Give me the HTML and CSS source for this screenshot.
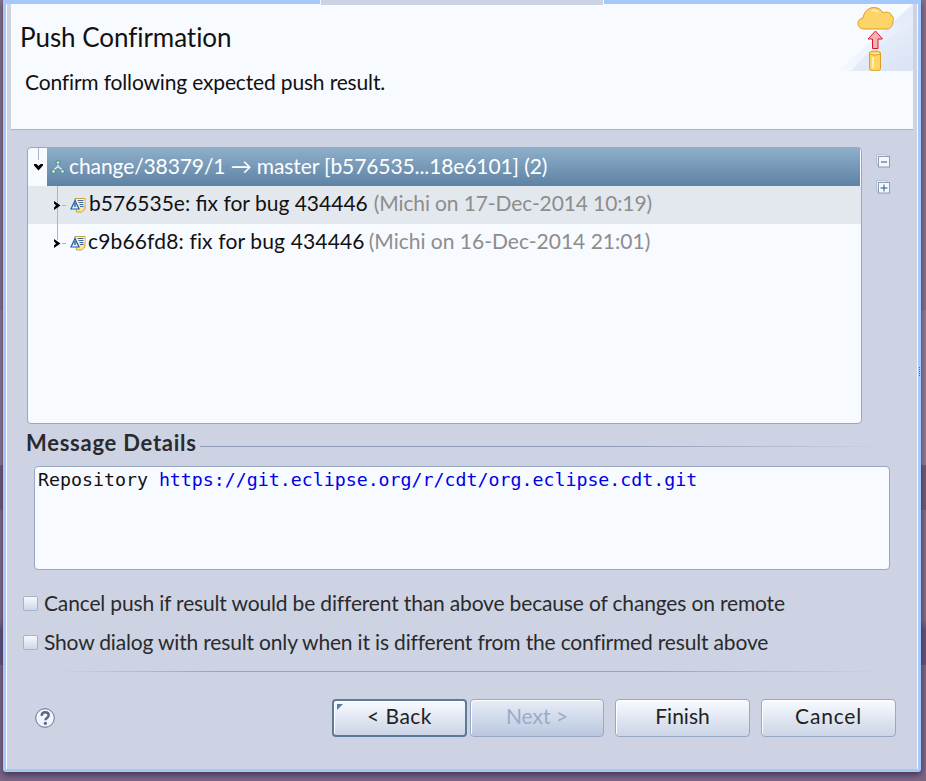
FILE: index.html
```html
<!DOCTYPE html>
<html lang="en">
<head>
<meta charset="utf-8">
<title>Push Confirmation</title>
<link rel="stylesheet" href="styles.css">
</head>
<body>
<div class="window">
  <div class="titlebar"><div class="tab"></div></div>
  <span class="grip"></span>
  <div class="inner">
    <header class="banner">
      <h1 class="title">Push Confirmation</h1>
      <p class="desc">Confirm following expected push result.</p>
      <svg class="wizimg" width="76" height="67" viewBox="0 0 76 67">
        <defs>
          <linearGradient id="wedge" x1="0" y1="1" x2="1" y2="0"><stop offset="0" stop-color="#f5f8fe"/><stop offset="1" stop-color="#e2e9f8"/></linearGradient>
          <linearGradient id="wedge2" x1="0" y1="0" x2="1" y2="1"><stop offset="0" stop-color="#eef2fb"/><stop offset="1" stop-color="#d9e3f5"/></linearGradient>
        </defs>
        <path d="M0 67Q38 35 76 0V67Z" fill="url(#wedge)"/>
        <path d="M14 67Q40 36 76 22V67Z" fill="url(#wedge2)"/>
        <path d="M27 25c-3.500 0-6-2.300-6-5.500 0-3 2-5 5-5.500C27 8 31 3.500 37 3.500c4.500 0 7.500 2.500 9 5.500 1.200-.6 2.300-.8 3.500-.8 3 0 5 1.600 5.500 4.300 0 0 0 0 .5 0 2.200 .9 .5 2.600 .5 5 0 4-2.500 7.500-6 7.500z" fill="#fdd467" stroke="#dd9f1f"/>
        <path d="M35 6.500c2.500-.8 5 0 6.500 2" fill="none" stroke="#ffefb8" stroke-width="1.500"/>
        <path d="M38.500 27l7 8h-4.500v9.500h-5.500V35H31z" fill="#f7b2b4" stroke="#d4182b"/>
        <path d="M32.500 49c0-2.600 11-2.600 11 0v16c0 2.400-11 2.400-11 0z" fill="#fdd467" stroke="#dd9f1f"/>
        <path d="M32.500 49c0 2.600 11 2.600 11 0" fill="#fde9a0" stroke="#dd9f1f"/>
        <path d="M36 53v11" stroke="#ffeeb5" stroke-width="2"/>
      </svg>
    </header>
    <div class="body">
      <div class="treearea">
        <div class="tree">
          <span class="guide guide-a"></span>
          <span class="guide guide-b"></span>
          <div class="row row-root">
            <svg class="tw tw-open" width="9" height="7" viewBox="0 0 9 7"><path d="M0 0h2.500L4.500 2 6.500 0H9V1.500L4.500 6.500 0 1.500z" fill="#000"/></svg>
            <div class="sel">
              <svg class="ic-branch" width="14" height="14" viewBox="0 0 14 14"><path d="M7 3v4.500M7 6.500L2.500 10M7 6.500l4.500 3.500" fill="none" stroke="#e4f5ee" stroke-width="1.300"/><circle cx="7" cy="2.500" r="1.900" fill="#c9ece0" stroke="#2f7f6f" stroke-width=".8"/><circle cx="2.500" cy="11.500" r="1.900" fill="#c9ece0" stroke="#2f7f6f" stroke-width=".8"/><circle cx="11.500" cy="11.500" r="1.900" fill="#c9ece0" stroke="#2f7f6f" stroke-width=".8"/></svg>
              <span class="seltext">change/38379/1 → master [b576535...18e6101] (2)</span>
            </div>
          </div>
          <div class="row row-commit row-alt">
            <svg class="tw tw-closed" width="7" height="9" viewBox="0 0 7 9"><path d="M0 0l6.500 4.500L0 9V6.500L2 4.500 0 2.500z" fill="#000"/></svg>
            <span class="dash"></span>
            <svg class="ic-commit" width="16" height="16" viewBox="0 0 16 16"><path d="M5 1.500h10v10.500l-3.500 3H6.500z" fill="#fde68f" stroke="#c9a23a"/><path d="M6 2h8.500v6H6z" fill="#f2f4f2"/><path d="M7.500 3.500h6M8.500 5.500h5M9.500 7.500h4M10 9.500h3.500" stroke="#41689f"/><path d="M5 3.500L1 12h8z" fill="#e8eef8" stroke="#1f5ea8" stroke-width="1.200"/><path d="M5 6v4" stroke="#1f5ea8" stroke-width="1.400"/></svg>
            <span class="ctext">b576535e: fix for bug 434446</span>
            <span class="cmeta">(Michi on 17-Dec-2014 10:19)</span>
          </div>
          <div class="row row-commit">
            <svg class="tw tw-closed" width="7" height="9" viewBox="0 0 7 9"><path d="M0 0l6.500 4.500L0 9V6.500L2 4.500 0 2.500z" fill="#000"/></svg>
            <span class="dash"></span>
            <svg class="ic-commit" width="16" height="16" viewBox="0 0 16 16"><path d="M5 1.500h10v10.500l-3.500 3H6.500z" fill="#fde68f" stroke="#c9a23a"/><path d="M6 2h8.500v6H6z" fill="#f2f4f2"/><path d="M7.500 3.500h6M8.500 5.500h5M9.500 7.500h4M10 9.500h3.500" stroke="#41689f"/><path d="M5 3.500L1 12h8z" fill="#e8eef8" stroke="#1f5ea8" stroke-width="1.200"/><path d="M5 6v4" stroke="#1f5ea8" stroke-width="1.400"/></svg>
            <span class="ctext ctext-c">c9b66fd8: fix for bug 434446</span>
            <span class="cmeta cmeta-c">(Michi on 16-Dec-2014 21:01)</span>
          </div>
        </div>
        <div class="sidetools">
          <svg width="14" height="14" viewBox="0 0 14 14"><rect x=".5" y=".5" width="10" height="10" fill="#e6ecf5" stroke="#b6c2d6"/><rect x="2.500" y="2.500" width="11" height="10.500" fill="#f4f7fb" stroke="#8d9cb5"/><path d="M5 8h6" stroke="#1c5a8c"/></svg>
          <svg width="14" height="14" viewBox="0 0 14 14"><rect x=".5" y=".5" width="10" height="10" fill="#e6ecf5" stroke="#b6c2d6"/><rect x="2.500" y="2.500" width="11" height="10.500" fill="#f4f7fb" stroke="#8d9cb5"/><path d="M4.500 8h7M8 4.500v7" stroke="#1c5a8c"/></svg>
        </div>
      </div>
      <div class="grouphead"><span class="grouplabel">Message Details</span><span class="groupline"></span></div>
      <div class="msgbox">Repository <span class="link">https://git.eclipse.org/r/cdt/org.eclipse.cdt.git</span></div>
      <label class="check check-1"><span class="box"></span><span class="cancel-text">Cancel push if result would be different than above because of changes on remote</span></label>
      <label class="check check-2"><span class="box"></span><span class="show-text">Show dialog with result only when it is different from the confirmed result above</span></label>
      <div class="sep"></div>
      <div class="footer">
        <svg class="help" width="20" height="20" viewBox="0 0 20 20"><circle cx="10" cy="10" r="9.300" fill="#f3f5fa" stroke="#5d7396"/><path d="M6.600 7.800C6.800 5.300 8.400 4.300 10.100 4.300c2.100 0 3.600 1.300 3.600 3 0 2.600-3.300 2.700-3.300 5" fill="none" stroke="#56688a" stroke-width="2.400"/><circle cx="10.400" cy="15.300" r="1.600" fill="#56688a"/></svg>
        <div class="buttons">
          <button class="btn btn-default">&lt; Back</button>
          <button class="btn btn-disabled">Next &gt;</button>
          <button class="btn btn-finish">Finish</button>
          <button class="btn btn-cancel">Cancel</button>
        </div>
      </div>
    </div>
  </div>
</div>
</body>
</html>
```
FILE: styles.css
```css
* { box-sizing: border-box; }
html, body { margin: 0; height: 781px; overflow: hidden; }
body {
  background: linear-gradient(#84718f 0, #84718f 310px, #8d7c98 310px, #8d7c98 465px, #6f5c7c 465px, #6f5c7c 510px, #7f6c8a 510px, #7f6c8a 620px, #5f5480 630px, #5f5480 665px, #7a6787 665px);
  font-family: Lato, "Noto Sans", sans-serif;
  color: #222;
}
.window {
  position: relative;
  margin-left: 3px;
  width: 918px;
  height: 772px;
  background: #a5c8fa;
  padding: 0 3px 3px 3px;
  border-radius: 0 0 3px 3px;
  box-shadow: 0 3px 6px rgba(50, 30, 60, .7);
  display: flex;
  flex-direction: column;
}
.grip { position: absolute; right: 1px; top: 367px; width: 1px; height: 9px; border-left: 1px dotted #2e72b8; }
.titlebar { height: 4px; padding-left: 314px; flex: none; }
.tab { position: relative; z-index: 1; width: 284px; height: 5px; background: #cdd3e2; border-left: 1px solid #f4f7fe; border-right: 1px solid #f4f7fe; }
.inner {
  flex: 1;
  background: #cdd3e2;
  border-left: 1px solid #f7faff;
  border-right: 1px solid #f7faff;
  display: flex;
  flex-direction: column;
}
.banner {
  position: relative;
  margin: 0 4px;
  height: 126px;
  background: #f7faff;
  border-bottom: 1px solid #a9b4cc;
  padding: 16px 0 0 9px;
  flex: none;
}
.title { margin: 0; font-size: 26px; line-height: 34px; font-weight: 400; color: #111; letter-spacing: -.05px; }
.desc { margin: 15px 0 0 5px; font-size: 21px; line-height: 26px; color: #111; letter-spacing: -.16px; }
.wizimg { position: absolute; right: 0; top: 0; display: block; }
.body { padding: 17px 0 0 20px; flex: 1; display: flex; flex-direction: column; }
.treearea { display: flex; height: 277px; flex: none; }
.tree {
  position: relative;
  width: 835px;
  height: 277px;
  background: #f7faff;
  border: 1px solid #9aa7c0;
  border-radius: 4px;
  font-size: 21px;
  color: #111;
}
.guide { position: absolute; width: 1px; background: #a9b5cc; }
.guide-a { left: 10px; top: 0; height: 12px; }
.guide-b { left: 29px; top: 38px; height: 54px; z-index: 1; }
.row { height: 38px; display: flex; align-items: center; white-space: nowrap; position: relative; }
.row-root { padding-left: 19px; }
.row-alt { background: #e3e8ee; }
.sel {
  flex: 1;
  height: 38px;
  margin-right: 1px;
  display: flex;
  align-items: center;
  background: linear-gradient(#8fafca, #5d82a4);
  color: #fff;
  padding-left: 4px;
}
.seltext { margin-left: 4px; padding-bottom: 4px; letter-spacing: -.1px; }
.tw { position: absolute; display: block; z-index: 2; }
.tw-open { left: 6px; top: 16px; }
.tw-closed { left: 26px; top: 15px; }
.dash { position: absolute; left: 34px; top: 19px; width: 4px; height: 1px; background: #a9b5cc; }
.ic-commit { margin-left: 42px; flex: none; }
.ctext { margin-left: 3px; padding-bottom: 5px; }
.ctext-c { margin-left: 2px; letter-spacing: .15px; }
.cmeta { margin-left: 6px; color: #8d8d8d; padding-bottom: 5px; letter-spacing: -.12px; }
.cmeta-c { margin-left: 4px; letter-spacing: 0; }
.sidetools { margin-left: 14px; padding-top: 7px; display: flex; flex-direction: column; gap: 12px; }
.sidetools svg { display: block; }
.grouphead { display: flex; align-items: center; height: 24px; margin-top: 8px; }
.grouplabel { font-size: 22px; font-weight: 700; color: #2a2a2e; letter-spacing: .75px; padding-bottom: 4px; margin-left: -1px; }
.groupline { flex: 1; height: 1px; margin: 4px 30px 0 3px; background: linear-gradient(90deg, #8e9bb5 60%, rgba(142,155,181,0)); }
.msgbox {
  margin: 10px 0 0 7px;
  width: 856px;
  height: 104px;
  background: #f7faff;
  border: 1px solid #9aa7c0;
  border-radius: 4px;
  padding: 1px 3px;
  font-family: "DejaVu Sans Mono", monospace;
  font-size: 18.250px;
  line-height: 24px;
  color: #111;
}
.link { color: #0000e6; }
.check { display: flex; align-items: center; height: 26px; font-size: 21px; color: #2a2a2e; margin-left: -4px; white-space: nowrap; }
.check-1 { margin-top: 20px; }
.check-2 { margin-top: 13px; }
.cancel-text { padding-bottom: 2px; letter-spacing: -.16px; }
.show-text { padding-bottom: 2px; letter-spacing: -.17px; }
.box {
  width: 15px;
  height: 15px;
  border: 1px solid #a6b2c8;
  border-radius: 2px;
  background: linear-gradient(#f6f8fc, #cfd8e8);
  margin-right: 6px;
  flex: none;
}
.sep { height: 1px; margin: 16px 30px 0 30px; background: linear-gradient(90deg, rgba(142,155,181,0), #96a3bc 20%, #96a3bc 70%, rgba(142,155,181,0)); flex: none; }
.footer { display: flex; align-items: center; justify-content: space-between; margin-top: 27px; height: 38px; padding-left: 8px; padding-right: 21px; flex: none; }
.help { display: block; }
.buttons { display: flex; }
.btn {
  position: relative;
  height: 38px;
  width: 135px;
  padding: 0 0 5px;
  font-family: inherit;
  font-size: 21px;
  color: #222;
  border: 1px solid #99a9c4;
  border-radius: 4px;
  background: linear-gradient(#f8faff, #cbd5e6);
  box-shadow: inset 1px 1px 0 #fff;
}
.btn-default { border: 2px solid #5d7a9a; letter-spacing: .5px; }
.btn-default::before { content: ""; position: absolute; left: 3px; top: 3px; border: 3px solid transparent; border-left-color: #5d7a9a; border-top-color: #5d7a9a; }
.btn-disabled { margin-left: 3px; width: 134px; color: #9aabc9; background: linear-gradient(#e8edf6, #b9c7df); }
.btn-finish { margin-left: 11px; }
.btn-cancel { margin-left: 11px; letter-spacing: .8px; }
```
